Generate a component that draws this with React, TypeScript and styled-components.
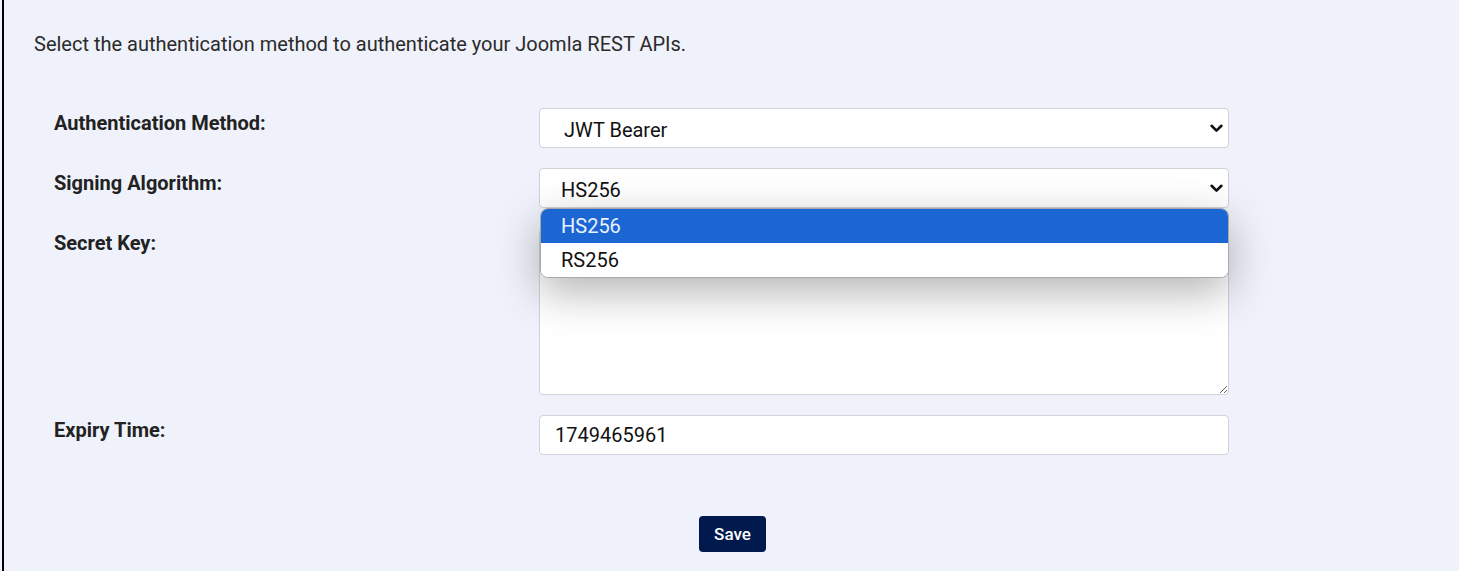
import * as React from 'react';
import styled, {createGlobalStyle} from "styled-components";

const GlobalStyle = createGlobalStyle`
  html, body {
    margin: 0;
    padding: 0;
    background: #eff2fa;
  }
  body {
    font-family: Roboto, "Liberation Sans", Arial, sans-serif;
    color: #222;
  }
`

type Field = {
	label: string
	kind: 'select' | 'textarea' | 'input'
	value?: string
	options?: string[]
	open?: boolean
	indent?: boolean
}

const fields: Field[] = [
	{label: 'Authentication Method:', kind: 'select', value: ' JWT Bearer', options: ['JWT Bearer'], indent: true},
	{label: 'Signing Algorithm:', kind: 'select', value: 'HS256', options: ['HS256', 'RS256'], open: true},
	{label: 'Secret Key:', kind: 'textarea'},
	{label: 'Expiry Time:', kind: 'input', value: '1749465961'},
]

function Chevron() {
	return (
		<ChevronIcon width="13" height="9" viewBox="0 0 13 9">
			<path d="M1.6 1.8 L6.5 6.6 L11.4 1.8" fill="none" stroke="#111" strokeWidth="2.6" strokeLinecap="round" strokeLinejoin="round"/>
		</ChevronIcon>
	)
}

function SelectBox({field}: {field: Field}) {
	return (
		<SelectWrap>
			<StyledSelect indent={field.indent}>
				<span>{field.value}</span>
				<Chevron/>
			</StyledSelect>
			{field.open && (
				<ListBox role="listbox">
					{field.options?.map((o, i) => (
						<Option key={o} active={i === 0}>{o}</Option>
					))}
				</ListBox>
			)}
		</SelectWrap>
	)
}

export default function App() {
	return (
		<>
			<GlobalStyle/>
			<Panel>
				<Intro>Select the authentication method to authenticate your Joomla REST APIs.</Intro>
				<Form>
					{fields.map(f => (
						<React.Fragment key={f.label}>
							<Label>{f.label}</Label>
							{f.kind === 'select' && <SelectBox field={f}/>}
							{f.kind === 'textarea' && <TextArea/>}
							{f.kind === 'input' && <TextInput defaultValue={f.value}/>}
						</React.Fragment>
					))}
				</Form>
				<Actions>
					<SaveButton>Save</SaveButton>
				</Actions>
			</Panel>
		</>
	)
}

const Panel = styled.div`
  margin-left: 2px;
  border-left: 2px solid #000;
  min-height: 571px;
  box-sizing: border-box;
  padding: 31px 0 0 30px;
`

const Intro = styled.p`
  margin: 0;
  font-size: 20px;
  line-height: 26px;
  color: #2b2b2b;
`

const Form = styled.div`
  display: grid;
  grid-template-columns: 485px 690px;
  row-gap: 20px;
  margin: 51px 0 0 20px;
`

const Label = styled.div`
  font-size: 20px;
  font-weight: 700;
  color: #222;
  padding-top: 3px;
  line-height: 24px;
`

const SelectWrap = styled.div`
  position: relative;
`

const fieldBase = `
  box-sizing: border-box;
  width: 690px;
  background: #fff;
  border: 1px solid #cfd3da;
  border-radius: 4px;
  font-family: Roboto, "Liberation Sans", Arial, sans-serif;
  font-size: 20px;
  color: #111;
`

const StyledSelect = styled.div<{indent?: boolean}>`
  ${fieldBase};
  height: 40px;
  display: flex;
  align-items: center;
  justify-content: space-between;
  padding: 0 5px 0 ${p => (p.indent ? '24px' : '21px')};

  span {
    padding-top: 3px;
  }
`

const ChevronIcon = styled.svg`
  display: block;
`

const ListBox = styled.div`
  position: absolute;
  left: 1px;
  right: 0;
  top: 40px;
  background: #fff;
  border: 1px solid #a9a9a9;
  border-radius: 8px;
  overflow: hidden;
  box-shadow: 0 14px 44px rgba(0, 0, 0, 0.3);
  z-index: 2;
`

const Option = styled.div<{active?: boolean}>`
  height: 34px;
  display: flex;
  align-items: center;
  padding-left: 20px;
  font-size: 20px;
  color: ${p => (p.active ? '#eaf2ff' : '#111')};
  background: ${p => (p.active ? '#1b66d2' : '#fff')};
`

const TextArea = styled.textarea`
  ${fieldBase};
  height: 167px;
  display: block;
  resize: vertical;
`

const TextInput = styled.input`
  ${fieldBase};
  height: 40px;
  padding: 0 15px;
  outline: none;
`

const Actions = styled.div`
  display: flex;
  justify-content: center;
  width: 1457px;
  margin: 61px 0 0 -30px;
  box-sizing: border-box;
`

const SaveButton = styled.button`
  width: 67px;
  height: 36px;
  border: none;
  border-radius: 4px;
  background: #001a4d;
  color: #fff;
  font-family: Roboto, "Liberation Sans", Arial, sans-serif;
  font-size: 17px;
  font-weight: 500;
`
